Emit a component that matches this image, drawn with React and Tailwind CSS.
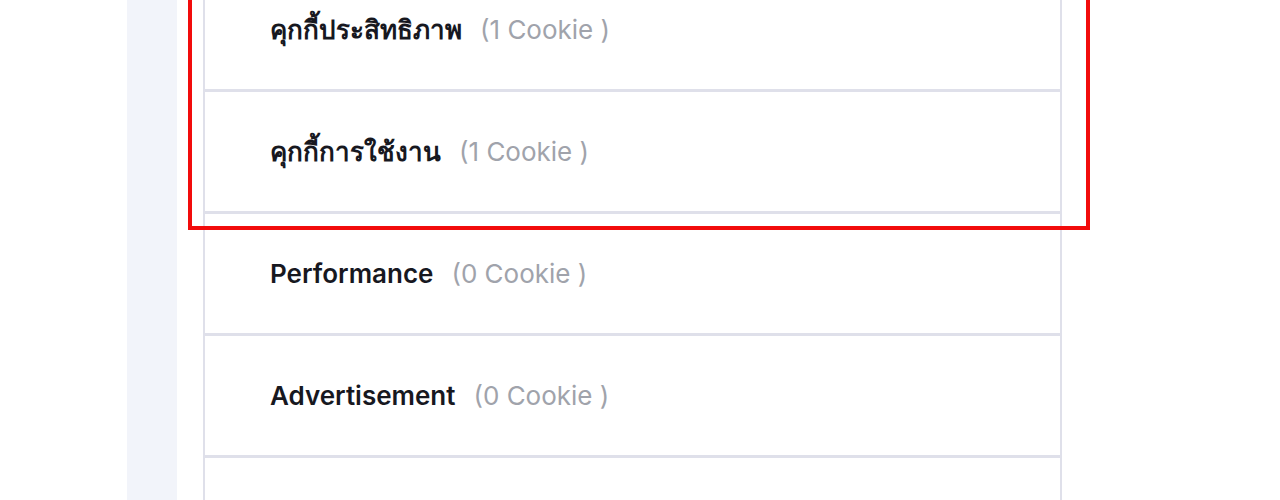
import React from 'react'

const rows = [
  { name: 'คุกกี้ประสิทธิภาพ', count: 1 },
  { name: 'คุกกี้การใช้งาน', count: 1 },
  { name: 'Performance', count: 0 },
  { name: 'Advertisement', count: 0 },
  { name: 'Others', count: 0 },
]

const App = () => {
  return (
    <div className="h-[500px] w-[1280px] overflow-hidden bg-white flex" style={{ fontFamily: 'Inter, "Noto Sans", "DejaVu Sans", sans-serif' }}>
      <div className="w-[127px] shrink-0 bg-white" />
      <div className="w-[50px] shrink-0 bg-[#f2f4fa]" />
      <div className="flex-1 relative">
        <div className="ml-[26px] w-[859px] mt-[-30px] border-x-2 border-[#dfe0ea]">
          {rows.map((r) => (
            <div key={r.name} className="h-[122px] border-b-[3px] border-[#dfe0ea] flex items-center pl-[65px]">
              <span className="text-[26px] font-semibold text-[#17181f]">{r.name}</span>
              <span className="ml-[18px] text-[26px] text-[#a0a3ab]">({r.count} Cookie )</span>
            </div>
          ))}
        </div>
        <div className="absolute left-[11px] top-[-40px] w-[902px] h-[270px] border-[4px] border-[#f20c0c] pointer-events-none" />
      </div>
    </div>
  )
}

export default App
